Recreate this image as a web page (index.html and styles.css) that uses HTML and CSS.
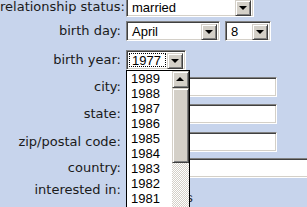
FILE: index.html
```html
<!DOCTYPE html>
<html lang="en">
<head>
<meta charset="UTF-8">
<title>Edit profile</title>
<link rel="stylesheet" href="styles.css">
</head>
<body>

<div class="form">
  <div class="lbl">relationship status:</div>
  <div class="fld">
    <div class="combo w-status"><span class="val">married</span><span class="btn"></span></div>
  </div>

  <div class="lbl">birth day:</div>
  <div class="fld">
    <div class="combo w-month"><span class="val">April</span><span class="btn"></span></div>
    <div class="combo w-day"><span class="val">8</span><span class="btn"></span></div>
  </div>

  <div class="lbl">birth year:</div>
  <div class="fld">
    <div class="combo w-year">
      <span class="val focus">1977</span><span class="btn"></span>
      <div class="list">
        <ul>
          <li>1989</li>
          <li>1988</li>
          <li>1987</li>
          <li>1986</li>
          <li>1985</li>
          <li>1984</li>
          <li>1983</li>
          <li>1982</li>
          <li>1981</li>
        </ul>
        <div class="sbar">
          <span class="sb-up"></span>
          <span class="sb-thumb"></span>
          <span class="sb-track"></span>
        </div>
      </div>
    </div>
  </div>

  <div class="lbl">city:</div>
  <div class="fld"><input class="txt" type="text"></div>

  <div class="lbl">state:</div>
  <div class="fld"><input class="txt" type="text"></div>

  <div class="lbl">zip/postal code:</div>
  <div class="fld"><input class="txt" type="text"></div>

  <div class="lbl">country:</div>
  <div class="fld"><input class="txt wide" type="text"></div>

  <div class="lbl">interested in:</div>
  <div class="fld interest"><span class="chk"></span>Females</div>
</div>

</body>
</html>
```

FILE: styles.css
```css
*{box-sizing:border-box;}

body{
    margin:0;
    background:#c7d4ec;
    font-family:"DejaVu Sans",Verdana,sans-serif;
    font-size:13px;
    color:#1a1a1a;
    overflow:hidden;
}

/* Form grid */
.form{
    display:grid;
    grid-template-columns:121px auto;
    grid-template-rows:24px 29px 27px 27px 28px 26px 22px 27px;
    column-gap:5px;
    margin-top:-3px;
}

.lbl{
    text-align:right;
    line-height:20px;
    white-space:nowrap;
}

.fld{
    display:flex;
    align-items:flex-start;
    gap:5px;
}

/* Classic sunken box */
.combo,.txt,.chk{
    background:#fff;
    border:1px solid;
    border-color:#808080 #fff #fff #808080;
    box-shadow:inset 1px 1px 0 #404040,inset -1px -1px 0 #d4d0c8;
}

.combo{
    position:relative;
    display:flex;
    height:20px;
    padding:2px;
    font-family:"Liberation Sans",Arial,sans-serif;
    font-size:13px;
    color:#000;
}

.w-status{width:128px;}
.w-month{width:94px;}
.w-day{width:46px;}
.w-year{width:60px;}

.val{
    flex:1;
    padding-left:3px;
    line-height:16px;
}

.val.focus{
    border:1px dotted #000;
    padding-left:2px;
    line-height:14px;
    margin-right:1px;
}

/* Raised button face */
.btn,.sb-up,.sb-thumb{
    background:#d4d0c8;
    border:1px solid;
    border-color:#d4d0c8 #404040 #404040 #d4d0c8;
    box-shadow:inset 1px 1px 0 #fff,inset -1px -1px 0 #808080;
}

.btn{
    position:relative;
    width:16px;
    height:16px;
}

.btn::after{
    content:"";
    position:absolute;
    left:3px;
    top:5px;
    border-left:4px solid transparent;
    border-right:4px solid transparent;
    border-top:4px solid #000;
}

/* Open dropdown */
.list{
    position:absolute;
    left:-1px;
    top:19px;
    width:64px;
    height:140px;
    display:flex;
    background:#fff;
    border:1px solid #000;
    z-index:5;
}

.list ul{
    flex:1;
    margin:0;
    padding:0 0 0 4px;
    list-style:none;
    line-height:15px;
    overflow:hidden;
}

.sbar{
    width:17px;
    display:flex;
    flex-direction:column;
}

.sb-up{
    position:relative;
    height:17px;
}

.sb-up::after{
    content:"";
    position:absolute;
    left:3px;
    top:5px;
    border-left:4px solid transparent;
    border-right:4px solid transparent;
    border-bottom:4px solid #000;
}

.sb-thumb{height:75px;}

.sb-track{
    flex:1;
    background:repeating-conic-gradient(#fff 0 25%,#d4d0c8 0 50%) 0 0/2px 2px;
}

/* Text inputs */
.txt{
    width:151px;
    height:20px;
    padding:0 3px;
    margin:0;
    outline:none;
}
.txt.wide{width:200px;}

.interest{
    margin-top:8px;
    line-height:20px;
    font-family:"Liberation Sans",Arial,sans-serif;
    gap:4px;
    align-items:center;
}

.chk{
    width:13px;
    height:13px;
}
```
